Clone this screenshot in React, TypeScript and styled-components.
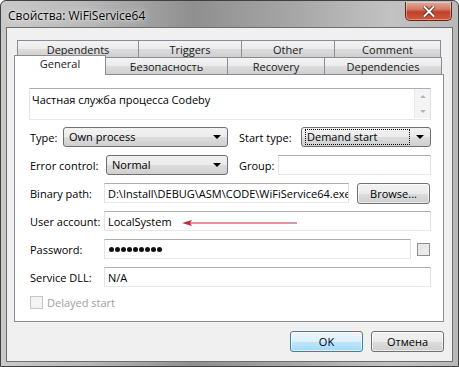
import styled, { createGlobalStyle, css } from "styled-components";

const GlobalStyle = createGlobalStyle`
  html, body {
    margin: 0;
    padding: 0;
    width: 459px;
    height: 367px;
    overflow: hidden;
    background: #ffffff;
  }
  * {
    box-sizing: border-box;
  }
  body {
    font-family: "Open Sans", "Noto Sans", sans-serif;
    font-size: 11px;
    color: #000;
  }
`;

const Window = styled.div`
  width: 459px;
  height: 367px;
  display: flex;
  flex-direction: column;
  border: 1px solid #404040;
  border-radius: 6px 6px 0 0;
  padding: 0 5px 4px 5px;
  overflow: hidden;
  background: linear-gradient(
    90deg,
    #c9c9c9 0%,
    #b9b9b9 18%,
    #8f8f8f 42%,
    #a4a4a4 62%,
    #c2c2c2 85%,
    #b8b8b8 100%
  );
`;

const TitleBar = styled.div`
  height: 26px;
  flex-shrink: 0;
  display: flex;
  align-items: flex-start;
  justify-content: space-between;
  padding-left: 2px;
`;

const Title = styled.div`
  margin-top: 6px;
  font-size: 12px;
  color: #000;
  text-shadow: 0 0 6px rgba(255, 255, 255, 0.9), 0 0 2px rgba(255, 255, 255, 0.8);
`;

const CloseButton = styled.div`
  width: 47px;
  height: 19px;
  margin-top: 1px;
  margin-right: 1px;
  border: 1px solid #5a2a22;
  border-top: none;
  border-radius: 0 0 5px 5px;
  background: linear-gradient(180deg, #e5a898 0%, #d47a66 40%, #c0412c 55%, #cc5a3f 100%);
  box-shadow: inset 0 0 0 1px rgba(255, 255, 255, 0.35);
  display: flex;
  align-items: center;
  justify-content: center;
`;

const Client = styled.div`
  flex: 1;
  display: flex;
  flex-direction: column;
  background: #f0f0f0;
  border: 1px solid #6e6e6e;
`;

const TabRows = styled.div`
  margin-top: 12px;
  display: flex;
  flex-direction: column;
`;

const TabRow = styled.div<{ $indent: number }>`
  display: flex;
  margin-left: ${(p) => p.$indent}px;
  height: 17px;
`;

const Tab = styled.div<{ $w: number; $active?: boolean }>`
  width: ${(p) => p.$w}px;
  height: 17px;
  border: 1px solid #898c95;
  border-bottom: none;
  margin-right: -1px;
  display: flex;
  align-items: center;
  justify-content: center;
  color: #1a1a1a;
  background: linear-gradient(180deg, #f3f3f3 0%, #ebebeb 50%, #dddddd 51%, #cfcfcf 100%);
  ${(p) =>
    p.$active &&
    css`
      position: relative;
      z-index: 1;
      height: 20px;
      margin-top: -2px;
      margin-bottom: -1px;
      padding-bottom: 4px;
      background: #ffffff;
    `}
`;

const Panel = styled.div`
  margin: 0 8px 0 7px;
  height: 248px;
  flex-shrink: 0;
  background: #ffffff;
  border: 1px solid #898c95;
  padding: 13px 0 0 14px;
  display: flex;
  flex-direction: column;
  position: relative;
  overflow: hidden;
`;

const Description = styled.div`
  width: 402px;
  height: 32px;
  border: 1px solid #abadb3;
  border-color: #abadb3 #dbdfe6 #e3e9ef #e2e3ea;
  display: flex;
  justify-content: space-between;
  padding: 3px 0 0 2px;
`;

const ScrollCol = styled.div`
  width: 16px;
  height: 29px;
  margin-top: -3px;
  display: flex;
  flex-direction: column;
  justify-content: space-between;
  align-items: center;
  padding: 6px 0 5px;
  background: #f4f4f4;
  border-left: 1px solid #e8e8e8;
`;

const Row = styled.div<{ $top: number }>`
  display: flex;
  align-items: center;
  height: 20px;
  margin-top: ${(p) => p.$top}px;
  padding-left: 1px;
  flex-shrink: 0;
`;

const Label = styled.div<{ $w: number; $muted?: boolean }>`
  width: ${(p) => p.$w}px;
  flex-shrink: 0;
  color: ${(p) => (p.$muted ? "#a0a0a0" : "#000")};
  white-space: nowrap;
`;

const Spacer = styled.div<{ $w: number }>`
  width: ${(p) => p.$w}px;
  flex-shrink: 0;
`;

const Combo = styled.div<{ $w: number }>`
  width: ${(p) => p.$w}px;
  height: 20px;
  flex-shrink: 0;
  border: 1px solid #707070;
  border-radius: 3px;
  background: linear-gradient(180deg, #f2f2f2 0%, #ebebeb 50%, #dddddd 51%, #cfcfcf 100%);
  display: flex;
  align-items: center;
  justify-content: space-between;
  padding: 0 6px 0 3px;
`;

const ComboText = styled.span<{ $focus?: boolean }>`
  flex: 1;
  height: 16px;
  line-height: 14px;
  padding-left: 1px;
  border: 1px dotted ${(p) => (p.$focus ? "#000" : "transparent")};
  margin-right: 6px;
  white-space: nowrap;
`;

const Arrow = styled.span`
  width: 0;
  height: 0;
  border-left: 4px solid transparent;
  border-right: 4px solid transparent;
  border-top: 4px solid #000;
`;

const TextBox = styled.div<{ $w: number }>`
  width: ${(p) => p.$w}px;
  height: 20px;
  flex-shrink: 0;
  border: 1px solid #abadb3;
  border-color: #abadb3 #dbdfe6 #e3e9ef #e2e3ea;
  background: #fff;
  display: flex;
  align-items: center;
  padding-left: 3px;
  white-space: nowrap;
  overflow: hidden;
`;

const Dots = styled.div`
  display: flex;
  gap: 1px;
  padding-left: 1px;
`;

const Dot = styled.span`
  width: 5px;
  height: 5px;
  border-radius: 50%;
  background: #111;
`;

const Button = styled.div<{ $w: number; $default?: boolean }>`
  width: ${(p) => p.$w}px;
  height: 21px;
  flex-shrink: 0;
  border: 1px solid ${(p) => (p.$default ? "#3c7fb1" : "#707070")};
  border-radius: 3px;
  display: flex;
  align-items: center;
  justify-content: center;
  background: ${(p) =>
    p.$default
      ? "linear-gradient(180deg, #eaf6fd 0%, #d9f0fc 50%, #bee6fd 51%, #a7d9f5 100%)"
      : "linear-gradient(180deg, #f2f2f2 0%, #ebebeb 50%, #dddddd 51%, #cfcfcf 100%)"};
  box-shadow: inset 0 0 0 1px rgba(255, 255, 255, 0.6);
`;

const CheckBox = styled.div<{ $disabled?: boolean }>`
  width: 13px;
  height: 13px;
  flex-shrink: 0;
  border: 1px solid ${(p) => (p.$disabled ? "#c5c5c5" : "#8e8f8f")};
  background: ${(p) =>
    p.$disabled ? "#f4f4f4" : "linear-gradient(135deg, #dcdcdc 0%, #f7f7f7 100%)"};
  box-shadow: inset 0 0 0 2px ${(p) => (p.$disabled ? "#f4f4f4" : "#e9e9e9")};
`;

const ButtonRow = styled.div`
  display: flex;
  justify-content: flex-end;
  gap: 8px;
  margin-top: 9px;
  padding-right: 8px;
`;

const Annotation = styled.svg`
  position: absolute;
  left: 167px;
  top: 144px;
`;

const Watermark = styled.div`
  position: absolute;
  left: 70px;
  top: 98px;
  font-size: 46px;
  font-weight: 700;
  color: rgba(0, 0, 0, 0.02);
  transform: rotate(-40deg);
  pointer-events: none;
  white-space: nowrap;
`;

const SmallTri = styled.span<{ $up?: boolean }>`
  width: 0;
  height: 0;
  border-left: 3px solid transparent;
  border-right: 3px solid transparent;
  ${(p) =>
    p.$up
      ? css`border-bottom: 3px solid #b4b4b4;`
      : css`border-top: 3px solid #b4b4b4;`}
`;

export default function App() {
  return (
    <>
      <GlobalStyle />
      <Window>
        <TitleBar>
          <Title>Свойства: WiFiService64</Title>
          <CloseButton>
            <svg width="12" height="11" viewBox="0 0 12 11">
              <path
                d="M1.5 1 L10.5 10 M10.5 1 L1.5 10"
                stroke="#5b1f16"
                strokeWidth="3.6"
                strokeLinecap="square"
              />
              <path
                d="M1.5 1 L10.5 10 M10.5 1 L1.5 10"
                stroke="#ffffff"
                strokeWidth="2"
                strokeLinecap="square"
              />
            </svg>
          </CloseButton>
        </TitleBar>
        <Client>
          <TabRows>
            <TabRow $indent={10}>
              <Tab $w={122}>Dependents</Tab>
              <Tab $w={104}>Triggers</Tab>
              <Tab $w={94}>Other</Tab>
              <Tab $w={107}>Comment</Tab>
            </TabRow>
            <TabRow $indent={7}>
              <Tab $w={92} $active>
                General
              </Tab>
              <Tab $w={123}>Безопасность</Tab>
              <Tab $w={98}>Recovery</Tab>
              <Tab $w={118}>Dependencies</Tab>
            </TabRow>
          </TabRows>
          <Panel>
            <Watermark>codeby.net</Watermark>
            <Description>
              <span>Частная служба процесса Codeby</span>
              <ScrollCol>
                <SmallTri $up />
                <SmallTri />
              </ScrollCol>
            </Description>
            <Row $top={7}>
              <Label $w={33}>Type:</Label>
              <Combo $w={165}>
                <ComboText>Own process</ComboText>
                <Arrow />
              </Combo>
              <Spacer $w={11} />
              <Label $w={62}>Start type:</Label>
              <Combo $w={130}>
                <ComboText $focus>Demand start</ComboText>
                <Arrow />
              </Combo>
            </Row>
            <Row $top={8}>
              <Label $w={76}>Error control:</Label>
              <Combo $w={122}>
                <ComboText>Normal</ComboText>
                <Arrow />
              </Combo>
              <Spacer $w={11} />
              <Label $w={39}>Group:</Label>
              <TextBox $w={153} />
            </Row>
            <Row $top={8}>
              <Label $w={74}>Binary path:</Label>
              <TextBox $w={245}>D:\Install\DEBUG\ASM\CODE\WiFiService64.exe</TextBox>
              <Spacer $w={8} />
              <Button $w={73}>Browse...</Button>
            </Row>
            <Row $top={8}>
              <Label $w={74}>User account:</Label>
              <TextBox $w={327}>LocalSystem</TextBox>
            </Row>
            <Row $top={8}>
              <Label $w={74}>Password:</Label>
              <TextBox $w={307}>
                <Dots>
                  {Array.from({ length: 9 }, (_, i) => (
                    <Dot key={i} />
                  ))}
                </Dots>
              </TextBox>
              <Spacer $w={6} />
              <CheckBox />
            </Row>
            <Row $top={8}>
              <Label $w={74}>Service DLL:</Label>
              <TextBox $w={327}>N/A</TextBox>
            </Row>
            <Row $top={5}>
              <CheckBox $disabled />
              <Spacer $w={4} />
              <Label $w={100} $muted>
                Delayed start
              </Label>
            </Row>
            <Annotation width="116" height="8" viewBox="0 0 116 8">
              <line x1="6" y1="4" x2="115" y2="4" stroke="#c8283c" strokeWidth="1.2" />
              <path d="M0 4 L10 1 L8 4 L10 7 Z" fill="#c8283c" />
            </Annotation>
          </Panel>
          <ButtonRow>
            <Button $w={73} $default>
              OK
            </Button>
            <Button $w={73}>Отмена</Button>
          </ButtonRow>
        </Client>
      </Window>
    </>
  );
}
